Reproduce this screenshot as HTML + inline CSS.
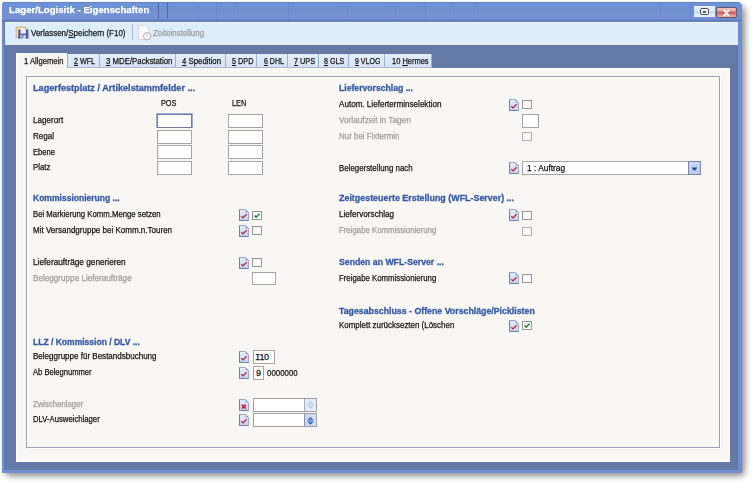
<!DOCTYPE html>
<html><head><meta charset="utf-8">
<style>
*{margin:0;padding:0;box-sizing:border-box}
html,body{width:752px;height:484px;overflow:hidden;background:#ffffff}
body{position:relative;font-family:"Liberation Sans",sans-serif}
.a{position:absolute}
.t{position:absolute;font-size:9px;line-height:9px;white-space:nowrap;color:#141414;-webkit-text-stroke:0.25px currentColor;transform-origin:0 0}
.g{color:#9c9c9c}
.h{position:absolute;font-size:9px;line-height:9px;white-space:nowrap;font-weight:bold;color:#3559a8;-webkit-text-stroke:0.3px currentColor;transform-origin:0 0}
.inp{position:absolute;background:#fff;border:1px solid #a4a4a4}
.cb{position:absolute;width:10px;height:9px;background:linear-gradient(135deg,#f4f4f4,#fff);border:1px solid #979797}
.cb.dis{border-color:#b0b0b0;background:#f8f8f8}
.doc{position:absolute;width:10px;height:12px}
.tab{position:absolute;top:54px;height:14px;background:linear-gradient(#e4eefa,#d6e4f5);border-left:1px solid #9db0cc;border-bottom:1px solid #a8b8d0}
u{text-decoration:underline;text-decoration-thickness:1px;text-underline-offset:1px}
</style></head><body>
<svg width="0" height="0" style="position:absolute">
<defs>
<linearGradient id="dg" x1="0" y1="0" x2="0" y2="1"><stop offset="0" stop-color="#e6eefb"/><stop offset="1" stop-color="#c2d2ef"/></linearGradient>
<symbol id="doc" viewBox="0 0 10 12">
<path d="M0.5 0.5 H6.5 L9.5 3.5 V11.5 H0.5 Z" fill="url(#dg)" stroke="#9aa6c8" stroke-width="1"/>
<path d="M0.5 0.5 V11.5 H9.5" fill="none" stroke="#7480a8" stroke-width="1"/>
<path d="M6.5 0.5 L9.5 3.5 H6.5 Z" fill="#94a8d4"/>
<path d="M2.3 7.3 L4 8.9 L7.6 5.2" fill="none" stroke="#c02438" stroke-width="1.3"/>
</symbol>
<symbol id="docx" viewBox="0 0 10 12">
<path d="M0.5 0.5 H6.5 L9.5 3.5 V11.5 H0.5 Z" fill="url(#dg)" stroke="#9aa6c8" stroke-width="1"/>
<path d="M0.5 0.5 V11.5 H9.5" fill="none" stroke="#7480a8" stroke-width="1"/>
<path d="M6.5 0.5 L9.5 3.5 H6.5 Z" fill="#94a8d4"/>
<path d="M2.8 5.6 L6.8 9.6 M6.8 5.6 L2.8 9.6" fill="none" stroke="#d8202e" stroke-width="1.5"/>
</symbol>
<symbol id="gchk" viewBox="0 0 10 9">
<path d="M2.6 4.6 L4.2 6.2 L7.6 2.8" fill="none" stroke="#1f8a30" stroke-width="1.5"/>
</symbol>
</defs>
</svg>

<div class="a" style="left:5px;top:6px;width:740px;height:470px;background:#909090;filter:blur(3px);border-radius:5px"></div>
<div class="a" style="left:2px;top:2px;width:740px;height:471px;background:#6479a6;border-radius:3px 5px 0 0"></div>
<div class="a" style="left:2px;top:470px;width:740px;height:3px;background:#6f8fd0"></div>
<div class="a" style="left:738px;top:20px;width:4px;height:453px;background:#6f8fd0"></div>
<div class="a" style="left:2px;top:20px;width:2px;height:453px;background:#7090d0"></div>
<div class="a" style="left:2px;top:2px;width:740px;height:19px;background:linear-gradient(#6d95dc 0%,#6a90d0 30%,#7392d2 60%,#7890dc 100%);border-top:1px solid #6582bc;border-radius:3px 5px 0 0"></div>
<div class="a" style="left:2px;top:19px;width:740px;height:3px;background:linear-gradient(#6a86cc,#6580ae)"></div>
<div class="a" style="left:158px;top:3px;width:1px;height:16px;background:#4f69a8"></div>
<div class="a" style="left:167px;top:3px;width:1px;height:16px;background:#4f69a8"></div>

<div class="a" style="left:198px;top:3px;width:1px;height:16px;background:#6989d2"></div>
<div class="a" style="left:216px;top:3px;width:1px;height:16px;background:#6989d2"></div>
<div class="a" style="left:234px;top:3px;width:1px;height:16px;background:#6989d2"></div>
<div class="a" style="left:288px;top:3px;width:1px;height:16px;background:#6989d2"></div>
<div class="a" style="left:347px;top:3px;width:1px;height:16px;background:#6989d2"></div>
<div class="a" style="left:395px;top:3px;width:1px;height:16px;background:#6989d2"></div>
<div class="a" style="left:425px;top:3px;width:1px;height:16px;background:#6989d2"></div>
<div class="a" style="left:450px;top:3px;width:1px;height:16px;background:#6989d2"></div>
<div class="a" style="left:474px;top:3px;width:1px;height:16px;background:#6989d2"></div>
<div class="a" style="left:660px;top:3px;width:1px;height:16px;background:#6989d2"></div>
<div class="a" style="left:690px;top:3px;width:1px;height:16px;background:#6989d2"></div>
<div class="t" style="left:9px;top:5px;transform:scaleX(1.0145);color:#fff;font-weight:bold;font-size:9.5px;line-height:9.5px">Lager/Logisitk - Eigenschaften</div>
<div class="a" style="left:694px;top:6px;width:21px;height:11px;background:linear-gradient(#eaf3fd,#dbe8f8 45%,#cdd8e4 55%,#dbe8f8 75%,#e6f0fc)"></div>
<div class="a" style="left:700px;top:8px;width:9px;height:7px;border:1.6px solid #4c5262;border-radius:2px;background:#fafcff"></div>
<div class="a" style="left:702.5px;top:10.6px;width:3.6px;height:2px;background:#505050"></div>
<div class="a" style="left:716px;top:7px;width:21px;height:11px;background:linear-gradient(#f0c2ba 0%,#e8aaa2 30%,#d25c52 50%,#da786e 65%,#eeb8b0 100%);border:1px solid #5e5a78;border-radius:2px"></div>
<svg class="a" style="left:721px;top:7.5px" width="11" height="10" viewBox="0 0 11 10"><path d="M3 2 L8 8 M8 2 L3 8" stroke="#fff" stroke-width="1.9"/></svg>

<div class="a" style="left:5px;top:22px;width:733px;height:22.5px;background:#deedfc;border-top:1px solid #eef6fe;border-bottom:1px solid #eaf4fe"></div>
<div class="a" style="left:132px;top:24px;width:1px;height:16px;background:#a9b8cc"></div>
<svg class="a" style="left:14px;top:24px" width="16" height="16" viewBox="0 0 16 16">
<rect x="2.3" y="3.2" width="9.2" height="10" fill="#f6f0e0" stroke="#d4b264" stroke-width="1.1"/>
<rect x="4.2" y="5.4" width="2.5" height="9.2" fill="#4a5aa8"/>
<rect x="11.8" y="5.4" width="2.6" height="9.2" fill="#4a5aa8"/>
<rect x="6.7" y="5.4" width="5.1" height="4.2" fill="#f2eeee"/>
<rect x="6.7" y="9.6" width="5.1" height="1.4" fill="#4e5eaa"/>
<rect x="6.7" y="11" width="5.1" height="3.6" fill="#c6cee6"/>
<path d="M7.6 14.6 L9.6 11.2" stroke="#5060b0" stroke-width="1"/>
</svg>
<svg class="a" style="left:137px;top:24px" width="16" height="17" viewBox="0 0 16 17">
<path d="M1.5 1.5 H8.5 L12 5 V15.5 H1.5 Z" fill="#f8f8f8" stroke="#dadada"/>
<circle cx="10.2" cy="12.3" r="3.7" fill="#f4f4f4" stroke="#b0b0b0" stroke-width="1"/>
<path d="M10.2 10.5 V12.3 L11.5 13.2" fill="none" stroke="#c0c0c0" stroke-width="0.8"/>
</svg>

<div class="t" style="left:31px;top:29px;transform:scaleX(0.8868);">Verlassen/<u>S</u>peichern (F10)</div>
<div class="t g" style="left:153px;top:29px;transform:scaleX(0.8793);">Zeiteinstellung</div>
<div class="tab" style="left:67px;width:32px;"></div>
<div class="tab" style="left:99px;width:76px;"></div>
<div class="tab" style="left:175px;width:50px;"></div>
<div class="tab" style="left:225px;width:31px;"></div>
<div class="tab" style="left:256px;width:31px;"></div>
<div class="tab" style="left:287px;width:31px;"></div>
<div class="tab" style="left:318px;width:30px;"></div>
<div class="tab" style="left:348px;width:36px;"></div>
<div class="tab" style="left:384px;width:48px;border-right:1px solid #9db0cc;"></div>
<div class="a" style="left:16px;top:68px;width:714px;height:394px;background:#f9f7f3;border:1px solid #fff"></div>
<div class="a" style="left:16px;top:53px;width:51px;height:16px;background:#f9f7f3;border-left:1px solid #fff;border-top:1px solid #fff"></div>

<div class="t" style="left:23.5px;top:57px;transform:scaleX(0.8478);">1 Allgemein</div>
<div class="t" style="left:73.5px;top:57px;transform:scaleX(0.7935);"><u>2</u> WFL</div>
<div class="t" style="left:105.5px;top:57px;transform:scaleX(0.8684);"><u>3</u> MDE/Packstation</div>
<div class="t" style="left:181.5px;top:57px;transform:scaleX(0.8667);"><u>4</u> Spedition</div>
<div class="t" style="left:231.5px;top:57px;transform:scaleX(0.8077);"><u>5</u> DPD</div>
<div class="t" style="left:263.5px;top:57px;transform:scaleX(0.7777);"><u>6</u> DHL</div>
<div class="t" style="left:294px;top:57px;transform:scaleX(0.8082);"><u>7</u> UPS</div>
<div class="t" style="left:324px;top:57px;transform:scaleX(0.7927);"><u>8</u> GLS</div>
<div class="t" style="left:354.5px;top:57px;transform:scaleX(0.7816);"><u>9</u> VLOG</div>
<div class="t" style="left:391.5px;top:57px;transform:scaleX(0.8318);">10 <u>H</u>ermes</div>
<div class="a" style="left:26px;top:76px;width:694px;height:372px;border:1px solid #9ca2b6;box-shadow:inset 1px 1px 0 #fff, 1px 1px 0 #fff"></div>
<div class="h" style="left:33.4px;top:84px;transform:scaleX(1.015);">Lagerfestplatz / Artikelstammfelder ...</div>
<div class="t" style="left:160.5px;top:99px;transform:scaleX(0.8107);">POS</div>
<div class="t" style="left:231.5px;top:99px;transform:scaleX(0.8118);">LEN</div>
<div class="t" style="left:33.4px;top:116px;transform:scaleX(0.9);">Lagerort</div>
<div class="t" style="left:33.4px;top:132px;transform:scaleX(0.8957);">Regal</div>
<div class="t" style="left:33.4px;top:148px;transform:scaleX(0.8466);">Ebene</div>
<div class="t" style="left:33.4px;top:163px;transform:scaleX(0.8701);">Platz</div>
<div class="a" style="left:156px;top:113px;width:37px;height:15px;border:1px solid #a4aed0;"></div>
<div class="inp" style="left:157px;top:114px;width:35px;height:14px;border-color:#737c9e"></div>
<div class="inp" style="left:157px;top:130px;width:35px;height:14px;"></div>
<div class="inp" style="left:157px;top:145px;width:35px;height:14px;"></div>
<div class="inp" style="left:157px;top:161px;width:35px;height:14px;"></div>
<div class="inp" style="left:228px;top:114px;width:35px;height:14px;"></div>
<div class="inp" style="left:228px;top:130px;width:35px;height:14px;"></div>
<div class="inp" style="left:228px;top:145px;width:35px;height:14px;"></div>
<div class="inp" style="left:228px;top:161px;width:35px;height:14px;"></div>
<div class="h" style="left:33.4px;top:194px;transform:scaleX(0.9473);">Kommissionierung ...</div>
<div class="t" style="left:33.4px;top:210px;transform:scaleX(0.8622);">Bei Markierung Komm.Menge setzen</div>
<div class="t" style="left:33.4px;top:226px;transform:scaleX(0.891);">Mit Versandgruppe bei Komm.n.Touren</div>
<div class="t" style="left:33.4px;top:258px;transform:scaleX(0.9168);">Lieferaufträge generieren</div>
<div class="t g" style="left:33.4px;top:274px;transform:scaleX(0.9046);">Beleggruppe Lieferaufträge</div>
<svg class="doc" style="left:239px;top:209px" width="10" height="12"><use href="#doc"/></svg>
<div class="cb" style="left:252px;top:211px"><svg width="10" height="9" style="position:absolute;left:-1px;top:-1px"><use href="#gchk"/></svg></div>
<svg class="doc" style="left:239px;top:225px" width="10" height="12"><use href="#doc"/></svg>
<div class="cb" style="left:252px;top:226px"></div>
<svg class="doc" style="left:239px;top:257px" width="10" height="12"><use href="#doc"/></svg>
<div class="cb" style="left:252px;top:258px"></div>
<div class="inp" style="left:252px;top:272px;width:24px;height:13px;"></div>
<div class="h" style="left:33.4px;top:338px;transform:scaleX(0.9469);">LLZ / Kommission / DLV ...</div>
<div class="t" style="left:33.4px;top:352px;transform:scaleX(0.8913);">Beleggruppe für Bestandsbuchung</div>
<div class="t" style="left:33.4px;top:368px;transform:scaleX(0.8429);">Ab Belegnummer</div>
<div class="t g" style="left:33.4px;top:400px;transform:scaleX(0.8622);">Zwischenlager</div>
<div class="t" style="left:33.4px;top:415px;transform:scaleX(0.8565);">DLV-Ausweichlager</div>
<svg class="doc" style="left:239px;top:351px" width="10" height="12"><use href="#doc"/></svg>
<div class="inp" style="left:253px;top:350px;width:22px;height:14px;"></div>
<div class="t" style="left:255px;top:353px;letter-spacing:-0.3px"><span style="font-family:'Liberation Mono';letter-spacing:-1px">I</span>10</div>
<svg class="doc" style="left:239px;top:367px" width="10" height="12"><use href="#doc"/></svg>
<div class="inp" style="left:253px;top:366px;width:11px;height:14px;"></div>
<div class="t" style="left:256px;top:369px;transform:scaleX(0.88);transform:none">9</div>
<div class="t" style="left:266.5px;top:369px;transform:scaleX(0.8743);">0000000</div>
<svg class="doc" style="left:239px;top:398.5px" width="10" height="12"><use href="#docx"/></svg>
<div class="inp" style="left:253px;top:397.5px;width:64px;height:14px;border-color:#a0a0a0"></div>
<div class="a" style="left:304px;top:398.5px;width:12px;height:12px;background:linear-gradient(90deg,#dfe7f8,#e8eefb);border-left:1px solid #a8aebc"></div>
<svg class="a" style="left:306px;top:400px" width="9" height="10" viewBox="0 0 9 10"><path d="M1.2 4.4 L4.5 1 L7.8 4.4 Z M1.2 5.4 H7.8 L4.5 8.8 Z" fill="#b4c4e6"/><path d="M3 4.2 L4.5 2.6 L6 4.2 Z M3 5.6 H6 L4.5 7.2 Z" fill="#d8e2f6"/></svg>
<svg class="doc" style="left:239px;top:414px" width="10" height="12"><use href="#doc"/></svg>
<div class="inp" style="left:253px;top:413px;width:64px;height:14px;border-color:#a0a0a0"></div>
<div class="a" style="left:304px;top:414px;width:12px;height:12px;background:linear-gradient(90deg,#c8d6f6,#d4e0fa);border-left:1px solid #8c92a8"></div>
<svg class="a" style="left:306px;top:415.5px" width="9" height="10" viewBox="0 0 9 10"><path d="M1.2 4.4 L4.5 1 L7.8 4.4 Z M1.2 5.4 H7.8 L4.5 8.8 Z" fill="#3656b0"/><path d="M3.2 4.1 L4.5 2.8 L5.8 4.1 Z M3.2 5.7 H5.8 L4.5 7 Z" fill="#9db4e8"/></svg>
<div class="h" style="left:339.3px;top:84px;transform:scaleX(0.9584);">Liefervorschlag ...</div>
<div class="t" style="left:339.3px;top:100px;transform:scaleX(0.8983);">Autom. Lieferterminselektion</div>
<div class="t g" style="left:339.3px;top:116px;transform:scaleX(0.9154);">Vorlaufzeit in Tagen</div>
<div class="t g" style="left:339.3px;top:132px;transform:scaleX(0.8824);">Nur bei Fixtermin</div>
<div class="t" style="left:339.3px;top:164px;transform:scaleX(0.8762);">Belegerstellung nach</div>
<svg class="doc" style="left:509px;top:99px" width="10" height="12"><use href="#doc"/></svg>
<div class="cb" style="left:522px;top:100px"></div>
<div class="inp" style="left:522px;top:114px;width:17px;height:14px;"></div>
<div class="cb dis" style="left:522px;top:132px"></div>
<svg class="doc" style="left:509px;top:162px" width="10" height="12"><use href="#doc"/></svg>
<div class="inp" style="left:522px;top:161px;width:179px;height:14px;"></div>
<div class="t" style="left:526.5px;top:164px;transform:scaleX(0.88);transform:scaleX(0.93)">1 : Auftrag</div>
<div class="a" style="left:688px;top:161px;width:13px;height:14px;background:linear-gradient(#cdd8fa,#bac8f4);border:1px solid #7c84a4"></div>
<svg class="a" style="left:690px;top:166px" width="9" height="6" viewBox="0 0 9 6"><path d="M1.5 1.5 H7.5 L4.5 5 Z" fill="#2e4680"/></svg>
<div class="h" style="left:339.3px;top:194px;transform:scaleX(0.9887);">Zeitgesteuerte Erstellung (WFL-Server) ...</div>
<div class="t" style="left:339.3px;top:210px;transform:scaleX(0.9016);">Liefervorschlag</div>
<div class="t g" style="left:339.3px;top:226px;transform:scaleX(0.8679);">Freigabe Kommissionierung</div>
<svg class="doc" style="left:509px;top:209px" width="10" height="12"><use href="#doc"/></svg>
<div class="cb" style="left:522px;top:210.5px"></div>
<div class="cb dis" style="left:522px;top:226.5px"></div>
<div class="h" style="left:339.3px;top:258px;transform:scaleX(0.9667);">Senden an WFL-Server ...</div>
<div class="t" style="left:339.3px;top:274px;transform:scaleX(0.8679);">Freigabe Kommissionierung</div>
<svg class="doc" style="left:509px;top:272px" width="10" height="12"><use href="#doc"/></svg>
<div class="cb" style="left:522px;top:273.5px"></div>
<div class="h" style="left:339.3px;top:307px;transform:scaleX(0.9751);">Tagesabschluss - Offene Vorschläge/Picklisten</div>
<div class="t" style="left:339.3px;top:321px;transform:scaleX(0.8831);">Komplett zurücksezten (Löschen</div>
<svg class="doc" style="left:509px;top:319.5px" width="10" height="12"><use href="#doc"/></svg>
<div class="cb" style="left:522px;top:321px"><svg width="10" height="9" style="position:absolute;left:-1px;top:-1px"><use href="#gchk"/></svg></div>
</body></html>
